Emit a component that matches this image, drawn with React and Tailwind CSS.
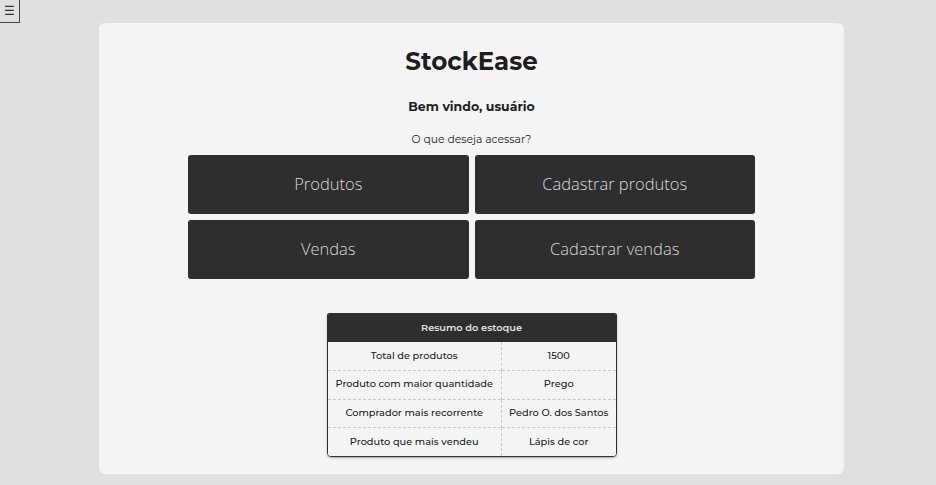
import React from 'react';

const opcoes = ['Produtos', 'Cadastrar produtos', 'Vendas', 'Cadastrar vendas'];

const resumo = [
  ['Total de produtos', '1500'],
  ['Produto com maior quantidade', 'Prego'],
  ['Comprador mais recorrente', 'Pedro O. dos Santos'],
  ['Produto que mais vendeu', 'Lápis de cor'],
];

export default function App() {
  return (
    <div className="min-h-[485px] bg-[#e0e0e0] pt-[23px] pb-[11px] font-['Montserrat','Noto_Sans',sans-serif] text-[#1e1e1e]">
      {/* menu toggle */}
      <button className="absolute left-0 top-0 w-[20px] h-[23px] border border-[#444] border-t-0 border-l-0 bg-[#e0e0e0] text-[12px] leading-none text-[#333] flex items-center justify-center">
        ☰
      </button>

      <main className="ml-[99px] w-[745px] h-[451px] rounded-[6px] bg-[#f4f4f4] flex flex-col items-center pt-[22px]">
        <h1 className="text-[24.5px] leading-[32px] font-bold">StockEase</h1>
        <h2 className="mt-[21px] text-[12.5px] leading-[18px] font-bold">Bem vindo, usuário</h2>
        <p className="mt-[17px] text-[10.8px] leading-[14px]">O que deseja acessar?</p>

        <div className="mt-[8px] grid grid-cols-2 gap-x-[6px] gap-y-[6px] w-[567px]">
          {opcoes.map((o) => (
            <button
              key={o}
              className="h-[59px] rounded-[3px] bg-[#2e2e2e] text-[#d8d8d8] text-[16.5px] font-light font-['Open_Sans',sans-serif] flex items-center justify-center"
            >
              {o}
            </button>
          ))}
        </div>

        <div className="mt-[34px] w-[290px] rounded-b-[4px] rounded-t-[2px] border border-[#333] shadow-[0_1px_2px_rgba(0,0,0,0.3)] overflow-hidden text-[9.8px] font-medium text-[#222]">
          <div className="h-[28px] bg-[#2e2e2e] text-[#e0e0e0] font-semibold flex items-center justify-center">
            Resumo do estoque
          </div>
          <table className="w-full border-collapse bg-[#f4f4f4]">
            <tbody>
              {resumo.map(([k, v], i) => (
                <tr key={k} className={i < resumo.length - 1 ? 'border-b border-dashed border-[#c8c8c8]' : ''}>
                  <td className="h-[28.5px] w-[174px] whitespace-nowrap text-center border-r border-dashed border-[#c8c8c8] px-[2px]">{k}</td>
                  <td className="h-[28.5px] whitespace-nowrap text-center px-[2px]">{v}</td>
                </tr>
              ))}
            </tbody>
          </table>
        </div>
      </main>
    </div>
  );
}
